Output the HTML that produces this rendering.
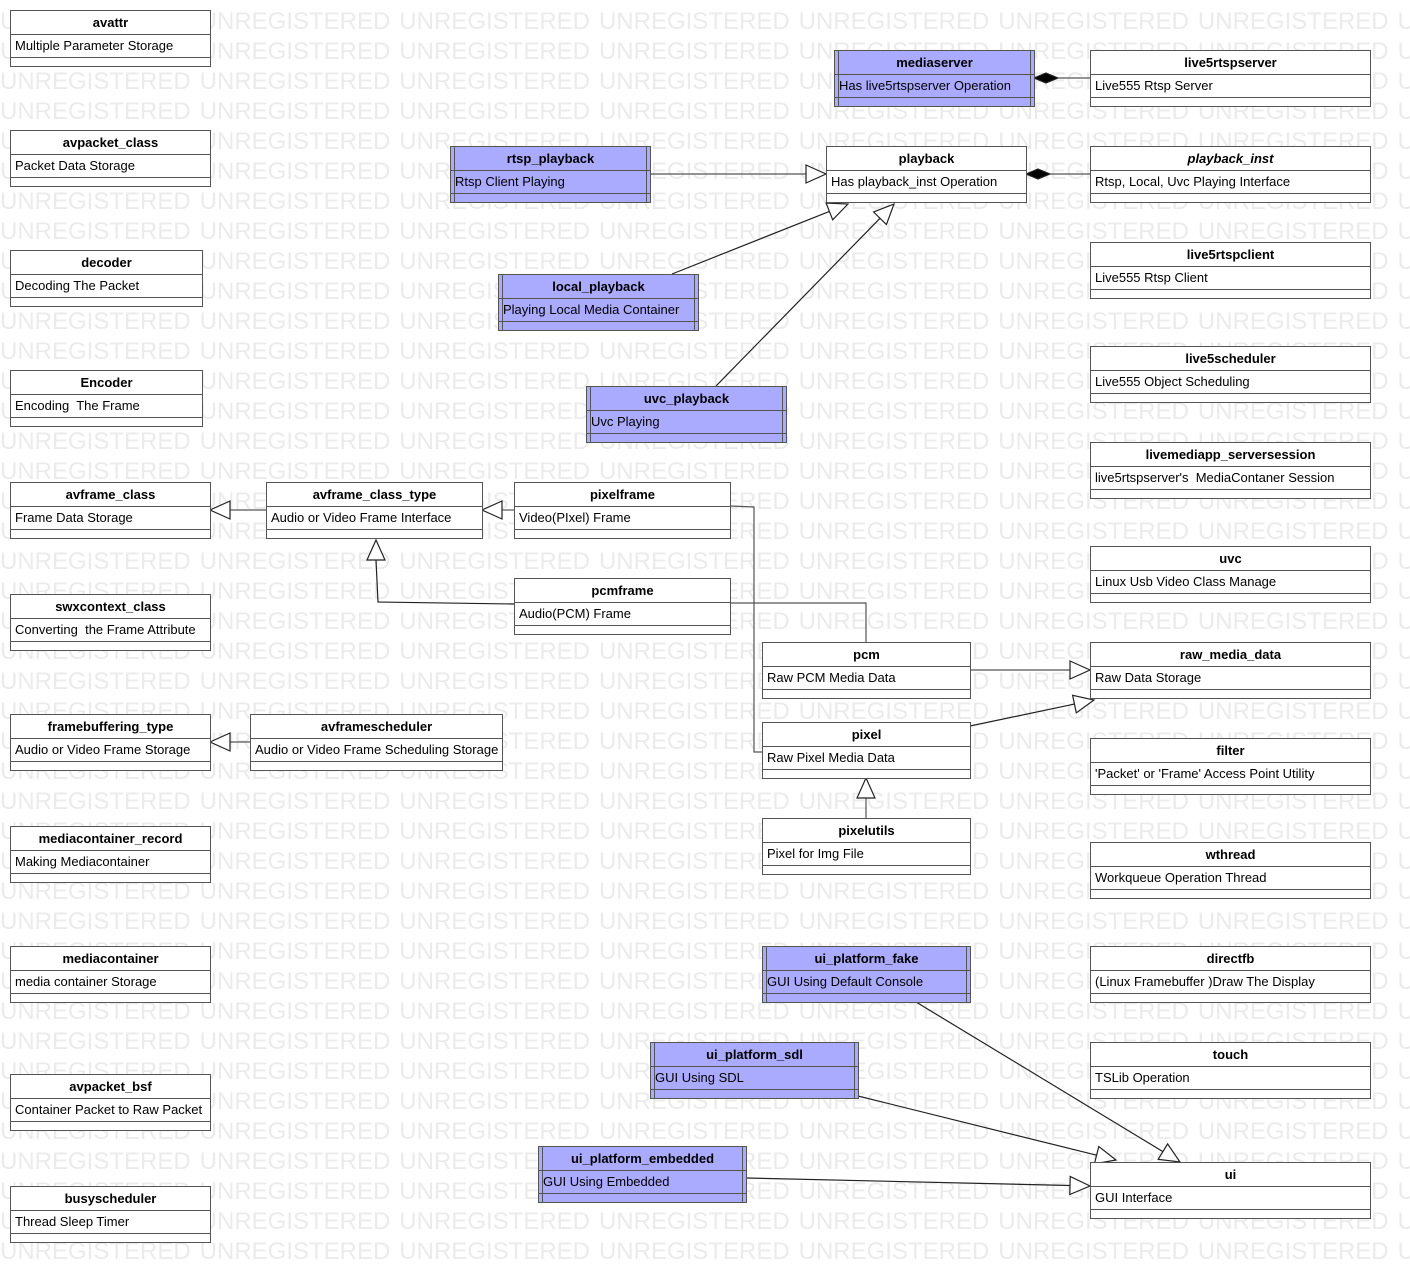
<!DOCTYPE html>
<html><head><meta charset="utf-8"><style>
html,body{margin:0;padding:0;background:#fff;}
body{width:1410px;height:1283px;position:relative;overflow:hidden;font-family:"Liberation Sans",Arial,sans-serif;}
#wm{position:absolute;left:0;top:7px;width:1410px;height:1276px;overflow:hidden;font-size:24px;line-height:30px;color:#ebebeb;white-space:pre;word-spacing:2.3px;}
svg{position:absolute;left:0;top:0;}
.b{position:absolute;background:#fff;border:1.5px solid #555;box-sizing:border-box;height:57px;font-size:13px;color:#000;}
.b .t{height:23px;border-bottom:1.5px solid #555;text-align:center;font-weight:bold;line-height:23px;}
.b .a{height:22px;border-bottom:1.5px solid #555;line-height:22px;padding-left:4px;white-space:nowrap;}
.bl{background:#aaaaff;}
.bl:before,.bl:after{content:"";position:absolute;top:0;bottom:0;width:0;border-left:1.5px solid #555;}
.bl:before{left:3px}.bl:after{right:3px}
</style></head><body>
<div id="wm">UNREGISTERED UNREGISTERED UNREGISTERED UNREGISTERED UNREGISTERED UNREGISTERED UNREGISTERED UNREGISTERED
UNREGISTERED UNREGISTERED UNREGISTERED UNREGISTERED UNREGISTERED UNREGISTERED UNREGISTERED UNREGISTERED
UNREGISTERED UNREGISTERED UNREGISTERED UNREGISTERED UNREGISTERED UNREGISTERED UNREGISTERED UNREGISTERED
UNREGISTERED UNREGISTERED UNREGISTERED UNREGISTERED UNREGISTERED UNREGISTERED UNREGISTERED UNREGISTERED
UNREGISTERED UNREGISTERED UNREGISTERED UNREGISTERED UNREGISTERED UNREGISTERED UNREGISTERED UNREGISTERED
UNREGISTERED UNREGISTERED UNREGISTERED UNREGISTERED UNREGISTERED UNREGISTERED UNREGISTERED UNREGISTERED
UNREGISTERED UNREGISTERED UNREGISTERED UNREGISTERED UNREGISTERED UNREGISTERED UNREGISTERED UNREGISTERED
UNREGISTERED UNREGISTERED UNREGISTERED UNREGISTERED UNREGISTERED UNREGISTERED UNREGISTERED UNREGISTERED
UNREGISTERED UNREGISTERED UNREGISTERED UNREGISTERED UNREGISTERED UNREGISTERED UNREGISTERED UNREGISTERED
UNREGISTERED UNREGISTERED UNREGISTERED UNREGISTERED UNREGISTERED UNREGISTERED UNREGISTERED UNREGISTERED
UNREGISTERED UNREGISTERED UNREGISTERED UNREGISTERED UNREGISTERED UNREGISTERED UNREGISTERED UNREGISTERED
UNREGISTERED UNREGISTERED UNREGISTERED UNREGISTERED UNREGISTERED UNREGISTERED UNREGISTERED UNREGISTERED
UNREGISTERED UNREGISTERED UNREGISTERED UNREGISTERED UNREGISTERED UNREGISTERED UNREGISTERED UNREGISTERED
UNREGISTERED UNREGISTERED UNREGISTERED UNREGISTERED UNREGISTERED UNREGISTERED UNREGISTERED UNREGISTERED
UNREGISTERED UNREGISTERED UNREGISTERED UNREGISTERED UNREGISTERED UNREGISTERED UNREGISTERED UNREGISTERED
UNREGISTERED UNREGISTERED UNREGISTERED UNREGISTERED UNREGISTERED UNREGISTERED UNREGISTERED UNREGISTERED
UNREGISTERED UNREGISTERED UNREGISTERED UNREGISTERED UNREGISTERED UNREGISTERED UNREGISTERED UNREGISTERED
UNREGISTERED UNREGISTERED UNREGISTERED UNREGISTERED UNREGISTERED UNREGISTERED UNREGISTERED UNREGISTERED
UNREGISTERED UNREGISTERED UNREGISTERED UNREGISTERED UNREGISTERED UNREGISTERED UNREGISTERED UNREGISTERED
UNREGISTERED UNREGISTERED UNREGISTERED UNREGISTERED UNREGISTERED UNREGISTERED UNREGISTERED UNREGISTERED
UNREGISTERED UNREGISTERED UNREGISTERED UNREGISTERED UNREGISTERED UNREGISTERED UNREGISTERED UNREGISTERED
UNREGISTERED UNREGISTERED UNREGISTERED UNREGISTERED UNREGISTERED UNREGISTERED UNREGISTERED UNREGISTERED
UNREGISTERED UNREGISTERED UNREGISTERED UNREGISTERED UNREGISTERED UNREGISTERED UNREGISTERED UNREGISTERED
UNREGISTERED UNREGISTERED UNREGISTERED UNREGISTERED UNREGISTERED UNREGISTERED UNREGISTERED UNREGISTERED
UNREGISTERED UNREGISTERED UNREGISTERED UNREGISTERED UNREGISTERED UNREGISTERED UNREGISTERED UNREGISTERED
UNREGISTERED UNREGISTERED UNREGISTERED UNREGISTERED UNREGISTERED UNREGISTERED UNREGISTERED UNREGISTERED
UNREGISTERED UNREGISTERED UNREGISTERED UNREGISTERED UNREGISTERED UNREGISTERED UNREGISTERED UNREGISTERED
UNREGISTERED UNREGISTERED UNREGISTERED UNREGISTERED UNREGISTERED UNREGISTERED UNREGISTERED UNREGISTERED
UNREGISTERED UNREGISTERED UNREGISTERED UNREGISTERED UNREGISTERED UNREGISTERED UNREGISTERED UNREGISTERED
UNREGISTERED UNREGISTERED UNREGISTERED UNREGISTERED UNREGISTERED UNREGISTERED UNREGISTERED UNREGISTERED
UNREGISTERED UNREGISTERED UNREGISTERED UNREGISTERED UNREGISTERED UNREGISTERED UNREGISTERED UNREGISTERED
UNREGISTERED UNREGISTERED UNREGISTERED UNREGISTERED UNREGISTERED UNREGISTERED UNREGISTERED UNREGISTERED
UNREGISTERED UNREGISTERED UNREGISTERED UNREGISTERED UNREGISTERED UNREGISTERED UNREGISTERED UNREGISTERED
UNREGISTERED UNREGISTERED UNREGISTERED UNREGISTERED UNREGISTERED UNREGISTERED UNREGISTERED UNREGISTERED
UNREGISTERED UNREGISTERED UNREGISTERED UNREGISTERED UNREGISTERED UNREGISTERED UNREGISTERED UNREGISTERED
UNREGISTERED UNREGISTERED UNREGISTERED UNREGISTERED UNREGISTERED UNREGISTERED UNREGISTERED UNREGISTERED
UNREGISTERED UNREGISTERED UNREGISTERED UNREGISTERED UNREGISTERED UNREGISTERED UNREGISTERED UNREGISTERED
UNREGISTERED UNREGISTERED UNREGISTERED UNREGISTERED UNREGISTERED UNREGISTERED UNREGISTERED UNREGISTERED
UNREGISTERED UNREGISTERED UNREGISTERED UNREGISTERED UNREGISTERED UNREGISTERED UNREGISTERED UNREGISTERED
UNREGISTERED UNREGISTERED UNREGISTERED UNREGISTERED UNREGISTERED UNREGISTERED UNREGISTERED UNREGISTERED
UNREGISTERED UNREGISTERED UNREGISTERED UNREGISTERED UNREGISTERED UNREGISTERED UNREGISTERED UNREGISTERED
UNREGISTERED UNREGISTERED UNREGISTERED UNREGISTERED UNREGISTERED UNREGISTERED UNREGISTERED UNREGISTERED</div>
<svg width="1410" height="1283" fill="none" stroke="#222" stroke-width="1.2">
<line x1="650" y1="174" x2="806" y2="174" stroke="#555"/><polygon points="826,174 806,165 806,183" fill="#fff"/>
<line x1="672" y1="274" x2="829.4" y2="211.4"/><polygon points="848,204 832.7,219.8 826.1,203" fill="#fff"/>
<line x1="716" y1="386" x2="880" y2="218.3"/><polygon points="894,204 886.4,224.6 873.6,212" fill="#fff"/>
<polygon points="1034,78 1046,73 1058,78 1046,83" fill="#000"/><line x1="1058" y1="78" x2="1090" y2="78" stroke="#555"/>
<polygon points="1026,174 1038,169 1050,174 1038,179" fill="#000"/><line x1="1050" y1="174" x2="1090" y2="174" stroke="#555"/>
<line x1="266" y1="510" x2="230" y2="510" stroke="#555"/><polygon points="210,510 230,501 230,519" fill="#fff"/>
<line x1="514" y1="510" x2="502" y2="510" stroke="#555"/><polygon points="482,510 502,501 502,519" fill="#fff"/>
<polyline points="514,604 378,602 376,560"/><polygon points="376,540 367,560 385,560" fill="#fff"/>
<polyline points="730,506 754,507 754,752 762,752" stroke="#555"/>
<polyline points="730,603 866,603 866,642" stroke="#555"/>
<line x1="970" y1="670" x2="1070" y2="670" stroke="#555"/><polygon points="1090,670 1070,661 1070,679" fill="#fff"/>
<line x1="970" y1="726" x2="1074.4" y2="704.1"/><polygon points="1094,700 1076.3,712.9 1072.6,695.3" fill="#fff"/>
<line x1="866" y1="818" x2="866" y2="798" stroke="#555"/><polygon points="866,778 857,798 875,798" fill="#fff"/>
<line x1="250" y1="742" x2="230" y2="742" stroke="#555"/><polygon points="210,742 230,733 230,751" fill="#fff"/>
<line x1="916" y1="1002" x2="1162.9" y2="1151.6"/><polygon points="1180,1162 1158.2,1159.3 1167.6,1143.9" fill="#fff"/>
<line x1="858" y1="1096" x2="1096.6" y2="1155.2"/><polygon points="1116,1160 1094.4,1163.9 1098.8,1146.5" fill="#fff"/>
<line x1="746" y1="1178" x2="1070" y2="1185.5"/><polygon points="1090,1186 1070.2,1176.5 1069.8,1194.5" fill="#fff"/>
</svg>

<div class="b" style="left:10px;top:10px;width:201px"><div class="t">avattr</div><div class="a">Multiple Parameter Storage</div></div>
<div class="b" style="left:10px;top:130px;width:201px"><div class="t">avpacket_class</div><div class="a">Packet Data Storage</div></div>
<div class="b" style="left:10px;top:250px;width:193px"><div class="t">decoder</div><div class="a">Decoding The Packet</div></div>
<div class="b" style="left:10px;top:370px;width:193px"><div class="t">Encoder</div><div class="a">Encoding&nbsp; The Frame</div></div>
<div class="b" style="left:10px;top:482px;width:201px"><div class="t">avframe_class</div><div class="a">Frame Data Storage</div></div>
<div class="b" style="left:10px;top:594px;width:201px"><div class="t">swxcontext_class</div><div class="a">Converting&nbsp; the Frame Attribute</div></div>
<div class="b" style="left:10px;top:714px;width:201px"><div class="t">framebuffering_type</div><div class="a">Audio or Video Frame Storage</div></div>
<div class="b" style="left:10px;top:826px;width:201px"><div class="t">mediacontainer_record</div><div class="a">Making Mediacontainer</div></div>
<div class="b" style="left:10px;top:946px;width:201px"><div class="t">mediacontainer</div><div class="a">media container Storage</div></div>
<div class="b" style="left:10px;top:1074px;width:201px"><div class="t">avpacket_bsf</div><div class="a">Container Packet to Raw Packet</div></div>
<div class="b" style="left:10px;top:1186px;width:201px"><div class="t">busyscheduler</div><div class="a">Thread Sleep Timer</div></div>

<div class="b bl" style="left:450px;top:146px;width:201px"><div class="t">rtsp_playback</div><div class="a">Rtsp Client Playing</div></div>
<div class="b bl" style="left:498px;top:274px;width:201px"><div class="t">local_playback</div><div class="a">Playing Local Media Container</div></div>
<div class="b bl" style="left:586px;top:386px;width:201px"><div class="t">uvc_playback</div><div class="a">Uvc Playing</div></div>
<div class="b" style="left:266px;top:482px;width:217px"><div class="t">avframe_class_type</div><div class="a">Audio or Video Frame Interface</div></div>
<div class="b" style="left:514px;top:482px;width:217px"><div class="t">pixelframe</div><div class="a">Video(PIxel) Frame</div></div>
<div class="b" style="left:514px;top:578px;width:217px"><div class="t">pcmframe</div><div class="a">Audio(PCM) Frame</div></div>
<div class="b" style="left:250px;top:714px;width:253px"><div class="t">avframescheduler</div><div class="a">Audio or Video Frame Scheduling Storage</div></div>
<div class="b bl" style="left:834px;top:50px;width:201px"><div class="t">mediaserver</div><div class="a">Has live5rtspserver Operation</div></div>
<div class="b" style="left:826px;top:146px;width:201px"><div class="t">playback</div><div class="a">Has playback_inst Operation</div></div>
<div class="b" style="left:762px;top:642px;width:209px"><div class="t">pcm</div><div class="a">Raw PCM Media Data</div></div>
<div class="b" style="left:762px;top:722px;width:209px"><div class="t">pixel</div><div class="a">Raw Pixel Media Data</div></div>
<div class="b" style="left:762px;top:818px;width:209px"><div class="t">pixelutils</div><div class="a">Pixel for Img File</div></div>
<div class="b bl" style="left:762px;top:946px;width:209px"><div class="t">ui_platform_fake</div><div class="a">GUI Using Default Console</div></div>
<div class="b bl" style="left:650px;top:1042px;width:209px"><div class="t">ui_platform_sdl</div><div class="a">GUI Using SDL</div></div>
<div class="b bl" style="left:538px;top:1146px;width:209px"><div class="t">ui_platform_embedded</div><div class="a">GUI Using Embedded</div></div>

<div class="b" style="left:1090px;top:50px;width:281px"><div class="t">live5rtspserver</div><div class="a">Live555 Rtsp Server</div></div>
<div class="b" style="left:1090px;top:146px;width:281px"><div class="t"><i>playback_inst</i></div><div class="a">Rtsp, Local, Uvc Playing Interface</div></div>
<div class="b" style="left:1090px;top:242px;width:281px"><div class="t">live5rtspclient</div><div class="a">Live555 Rtsp Client</div></div>
<div class="b" style="left:1090px;top:346px;width:281px"><div class="t">live5scheduler</div><div class="a">Live555 Object Scheduling</div></div>
<div class="b" style="left:1090px;top:442px;width:281px"><div class="t">livemediapp_serversession</div><div class="a">live5rtspserver's&nbsp; MediaContaner Session</div></div>
<div class="b" style="left:1090px;top:546px;width:281px"><div class="t">uvc</div><div class="a">Linux Usb Video Class Manage</div></div>
<div class="b" style="left:1090px;top:642px;width:281px"><div class="t">raw_media_data</div><div class="a">Raw Data Storage</div></div>
<div class="b" style="left:1090px;top:738px;width:281px"><div class="t">filter</div><div class="a">'Packet' or 'Frame' Access Point Utility</div></div>
<div class="b" style="left:1090px;top:842px;width:281px"><div class="t">wthread</div><div class="a">Workqueue Operation Thread</div></div>
<div class="b" style="left:1090px;top:946px;width:281px"><div class="t">directfb</div><div class="a">(Linux Framebuffer )Draw The Display</div></div>
<div class="b" style="left:1090px;top:1042px;width:281px"><div class="t">touch</div><div class="a">TSLib Operation</div></div>
<div class="b" style="left:1090px;top:1162px;width:281px"><div class="t">ui</div><div class="a">GUI Interface</div></div>
</body></html>
